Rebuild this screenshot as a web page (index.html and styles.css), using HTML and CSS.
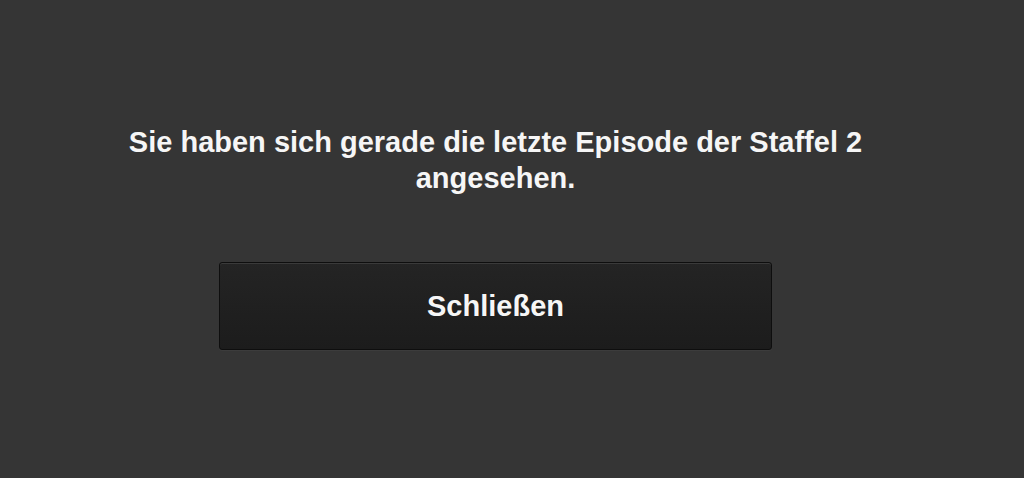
FILE: index.html
```html
<!DOCTYPE html>
<html>
<head>
    <title>Staffel beendet</title>
    <link rel="stylesheet" href="styles.css">
</head>
<body>
    <div class="container">
        <p class="message">Sie haben sich gerade die letzte Episode der Staffel 2 angesehen.</p>
        <button class="close-btn">Schließen</button>
    </div>
</body>
</html>
```

FILE: styles.css
```css
html, body {
    margin: 0;
    height: 100%;
}

body {
    background-color: #353535;
    font-family: "Liberation Sans", Arial, sans-serif;
    color: #f6f6f6;
}

.container {
    width: 991px;
    padding-top: 124px;
    display: flex;
    flex-direction: column;
    align-items: center;
}

.message {
    margin: 0;
    max-width: 780px;
    text-align: center;
    font-size: 29px;
    font-weight: bold;
    line-height: 36px;
}

.close-btn {
    margin-top: 66px;
    width: 553px;
    height: 88px;
    background: linear-gradient(#242424, #1c1c1c);
    border: 1px solid #0e0e0e;
    border-radius: 3px;
    box-shadow: inset 0 1px 0 #3a3a3a, 0 1px 0 #3c3c3c;
    color: #f6f6f6;
    font-family: "Liberation Sans", Arial, sans-serif;
    font-size: 29px;
    font-weight: bold;
    cursor: pointer;
}
```
